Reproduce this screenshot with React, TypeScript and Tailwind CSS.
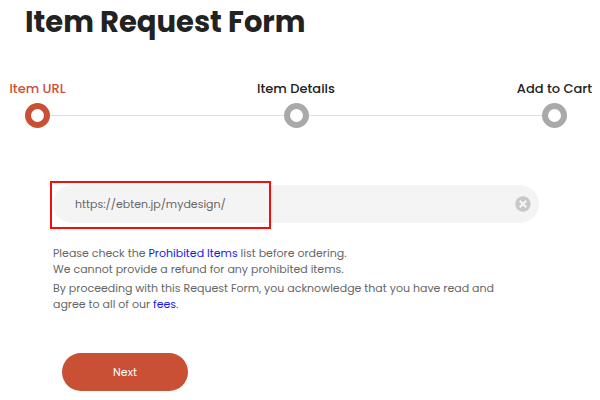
import { useState } from "react";

const steps = ["Item URL", "Item Details", "Add to Cart"];

function Stepper({ current }: { current: number }) {
  return (
    <ol className="relative mt-[39px] mr-2 flex justify-between">
      <li aria-hidden="true" className="absolute inset-x-[38px] bottom-3 h-px bg-[#dedee4]" />
      {steps.map((label, i) => (
        <li
          key={label}
          aria-current={i === current ? "step" : undefined}
          className="relative flex w-[75px] flex-col items-center gap-1"
        >
          <span
            className={`text-[13px] leading-5 font-medium whitespace-nowrap ${
              i === current ? "text-[#cb5138]" : "text-[#222222]"
            }`}
          >
            {label}
          </span>
          <span
            className={`size-[25px] rounded-full border-[6px] bg-white ${
              i === current ? "border-[#c94f35]" : "border-[#a9a9a9]"
            }`}
          />
        </li>
      ))}
    </ol>
  );
}

export default function App() {
  const [url, setUrl] = useState("https://ebten.jp/mydesign/");

  return (
    <main className="bg-white pb-2 font-['Poppins','Inter',sans-serif] text-[#666666]">
      <h1 className="pt-[5px] pl-[25px] text-[29px] leading-[35px] font-bold text-[#222222]">
        Item Request Form
      </h1>
      <Stepper current={0} />
      <form className="mt-[57px] mr-[61px] ml-[53px]" onSubmit={(e) => e.preventDefault()}>
        <div className="relative flex h-[38px] items-center rounded-full bg-[#f4f4f4] pr-2 pl-[22px]">
          <input
            type="text"
            aria-label="Item URL"
            value={url}
            onChange={(e) => setUrl(e.target.value)}
            className="min-w-0 flex-1 bg-transparent text-[11px] leading-4 outline-none"
          />
          <button type="button" aria-label="Clear" onClick={() => setUrl("")}>
            <svg viewBox="0 0 16 16" className="size-4">
              <circle cx="8" cy="8" r="7.7" fill="#c8c8c8" />
              <path d="M4.7 4.7l6.6 6.6M11.3 4.7l-6.6 6.6" stroke="#f7f7f7" strokeWidth="2" />
            </svg>
          </button>
          <div className="pointer-events-none absolute -top-1 -left-[3px] h-12 w-[221px] border-2 border-[#fb0a0a]" />
        </div>
        <div className="mt-[22px] space-y-[3px] text-[11px] leading-4">
          <p>
            Please check the{" "}
            <a href="#prohibited" className="text-[#1515f5]">
              Prohibited Items
            </a>{" "}
            list before ordering.
            <br />
            We cannot provide a refund for any prohibited items.
          </p>
          <p>
            By proceeding with this Request Form, you acknowledge that you have read and
            <br />
            agree to all of our{" "}
            <a href="#fees" className="text-[#1515f5]">
              fees
            </a>
            .
          </p>
        </div>
        <button
          type="submit"
          className="mt-[41px] ml-[9px] h-[38px] w-[126px] rounded-full bg-[#c94f35] text-[11px] text-white"
        >
          Next
        </button>
      </form>
    </main>
  );
}
